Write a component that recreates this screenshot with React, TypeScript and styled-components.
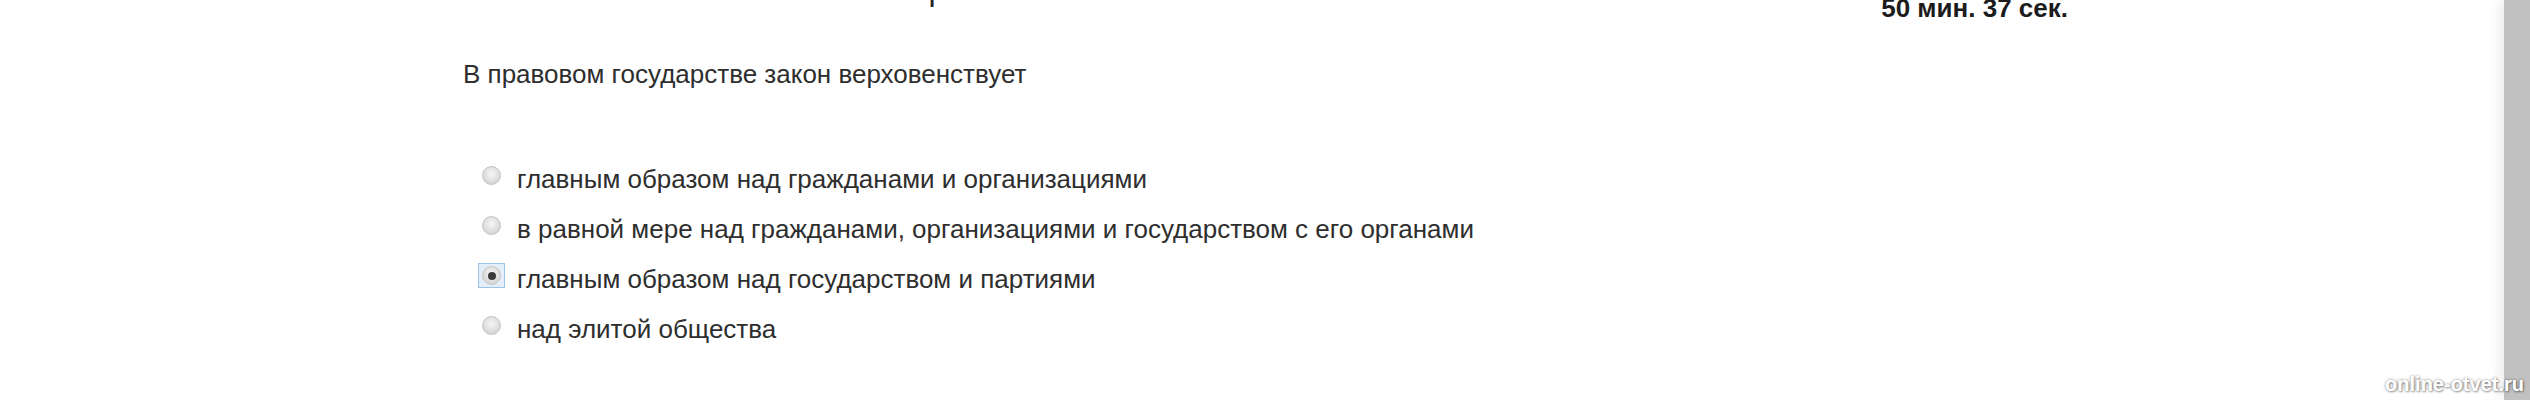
import React from 'react';
import styled, {createGlobalStyle} from 'styled-components';

const GlobalStyle = createGlobalStyle`
  html, body {
    margin: 0;
    padding: 0;
    background: #fff;
  }
  body {
    font-family: "Liberation Sans", Arial, sans-serif;
    color: #333;
  }
`;

const Page = styled.div`
  position: relative;
  display: flex;
  width: 2530px;
  height: 400px;
  overflow: hidden;
  background: #fff;
`;

const Main = styled.div`
  flex: 1;
  display: flex;
  flex-direction: column;
`;

// the heading sits mostly above the visible area, only its descender shows
const Header = styled.div`
  display: flex;
  align-items: flex-start;
  height: 22px;
  padding-left: 872px;
  padding-right: 436px;
`;

const Title = styled.h2`
  margin: -27px 0 0;
  font-size: 32px;
  line-height: 32px;
  font-weight: normal;
  color: #222;
`;

const Timer = styled.div`
  margin: -5px 0 0 auto;
  font-size: 26px;
  line-height: 26px;
  font-weight: bold;
  color: #1c1c1c;
`;

const Content = styled.div`
  padding-left: 463px;
`;

const Question = styled.p`
  margin: 37px 0 0;
  font-size: 26px;
  line-height: 30px;
  color: #2e2e2e;
`;

const Options = styled.ul`
  list-style: none;
  margin: 65px 0 0;
  padding: 0 0 0 15px;
`;

const Option = styled.li`
  display: flex;
  align-items: flex-start;
  height: 50px;
  font-size: 26px;
  line-height: 50px;
  color: #2e2e2e;
`;

const RadioBox = styled.span<{ $checked?: boolean }>`
  display: flex;
  align-items: center;
  justify-content: center;
  flex: none;
  width: 27px;
  height: 25px;
  margin: 9px 12px 0 0;
  box-sizing: border-box;
  border: 1px solid ${p => p.$checked ? '#9cc3ea' : 'transparent'};
  background: ${p => p.$checked ? '#e4eef8' : 'transparent'};
`;

const RadioDot = styled.span<{ $checked?: boolean }>`
  position: relative;
  width: 19px;
  height: 19px;
  border-radius: 50%;
  box-sizing: border-box;
  border: 1px solid #c4c4c4;
  background: radial-gradient(circle at 50% 40%, #f6f6f6 0%, #dedede 55%, #c9c9c9 100%);

  &::after {
    content: '';
    position: absolute;
    left: 50%;
    top: 50%;
    width: 8px;
    height: 8px;
    margin: -4px 0 0 -4px;
    border-radius: 50%;
    background: ${p => p.$checked ? '#3a3a3a' : 'transparent'};
  }
`;

const Scrollbar = styled.div`
  flex: none;
  width: 26px;
  height: 100%;
  background: #c1c1c1;
  box-shadow: -6px 0 10px rgba(0, 0, 0, 0.06);
`;

const Watermark = styled.div`
  position: absolute;
  right: 6px;
  bottom: 4px;
  font-size: 20px;
  font-weight: bold;
  color: #fff;
  text-shadow: 0 0 3px rgba(0, 0, 0, 0.45), 1px 1px 2px rgba(0, 0, 0, 0.3);
`;

const answers = [
  'главным образом над гражданами и организациями',
  'в равной мере над гражданами, организациями и государством с его органами',
  'главным образом над государством и партиями',
  'над элитой общества',
];

function App() {
  const selected = 2;

  return (
    <Page>
      <GlobalStyle/>
      <Main>
        <Header>
          <Title>Вопрос</Title>
          <Timer>50 мин. 37 сек.</Timer>
        </Header>
        <Content>
          <Question>В правовом государстве закон верховенствует</Question>
          <Options>
            {answers.map((text, i) =>
              <Option key={i}>
                <RadioBox $checked={i === selected}>
                  <RadioDot $checked={i === selected}/>
                </RadioBox>
                {text}
              </Option>
            )}
          </Options>
        </Content>
      </Main>
      <Scrollbar/>
      <Watermark>online-otvet.ru</Watermark>
    </Page>
  );
}

export default App;
